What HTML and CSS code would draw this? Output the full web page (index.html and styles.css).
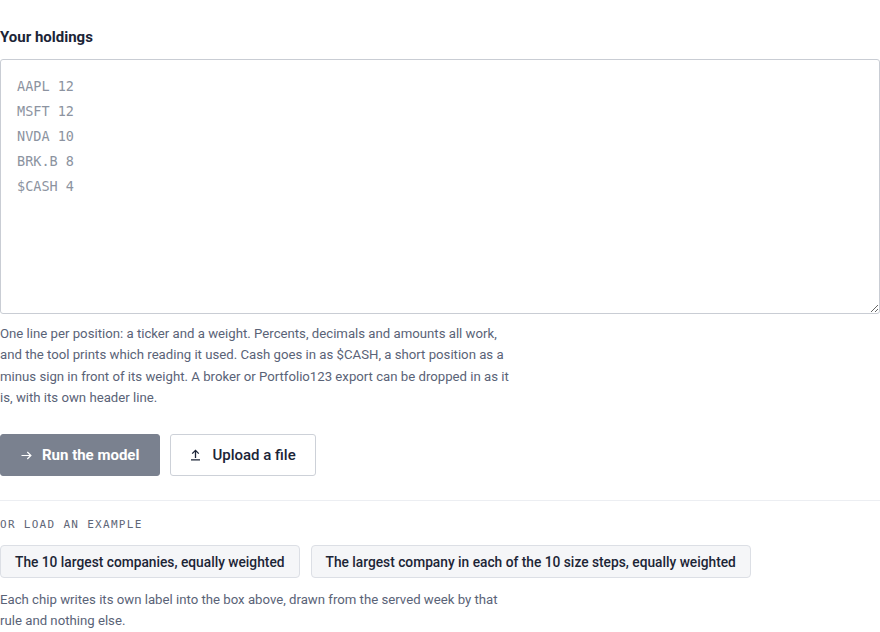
FILE: index.html
```html
<!DOCTYPE html>
<html lang="en">
<head>
<meta charset="utf-8">
<link rel="stylesheet" href="styles.css">
</head>
<body>
<main class="page">
  <label class="heading" for="holdings">Your holdings</label>
  <textarea id="holdings" class="holdings" placeholder="AAPL 12
MSFT 12
NVDA 10
BRK.B 8
$CASH 4"></textarea>
  <p class="help">One line per position: a ticker and a weight. Percents, decimals and amounts all work, and the tool prints which reading it used. Cash goes in as $CASH, a short position as a minus sign in front of its weight. A broker or Portfolio123 export can be dropped in as it is, with its own header line.</p>
  <div class="actions">
    <button class="btn btn-primary" type="button">
      <svg class="btn-svg" width="11" height="9" viewBox="0 0 11 9" aria-hidden="true"><path d="M0.5 4.5h9.5M6.3 1 9.9 4.5 6.3 8" fill="none" stroke="currentColor" stroke-width="1.2"/></svg>
      Run the model</button>
    <button class="btn btn-secondary" type="button">
      <svg class="btn-svg" width="11" height="12" viewBox="0 0 11 12" aria-hidden="true"><path d="M5.5 9V1.5M2.2 4.6 5.5 1.3l3.3 3.3M1 10.8h9" fill="none" stroke="currentColor" stroke-width="1.3"/></svg>
      Upload a file</button>
  </div>
  <hr class="divider">
  <div class="examples-label">OR LOAD AN EXAMPLE</div>
  <div class="chips">
    <button class="chip" type="button">The 10 largest companies, equally weighted</button>
    <button class="chip" type="button">The largest company in each of the 10 size steps, equally weighted</button>
  </div>
  <p class="help foot">Each chip writes its own label into the box above, drawn from the served week by that rule and nothing else.</p>
</main>
</body>
</html>
```
FILE: styles.css
```css
html, body {
  margin: 0;
  padding: 0;
  background: #ffffff;
}
body {
  font-family: Roboto, "Noto Sans", sans-serif;
  color: #1c2536;
}
.page {
  width: 880px;
  padding-top: 27px;
  display: flex;
  flex-direction: column;
  align-items: flex-start;
}
.heading {
  font-size: 15px;
  font-weight: 700;
  line-height: 20px;
  color: #1b2437;
  margin-bottom: 12px;
}
.holdings {
  box-sizing: border-box;
  width: 880px;
  height: 255px;
  margin: 0;
  padding: 14px 16px;
  border: 1px solid #c9cdd4;
  border-radius: 3px;
  font-family: "DejaVu Sans Mono", "Liberation Mono", monospace;
  font-size: 13.5px;
  line-height: 25px;
  color: #1c2536;
  resize: vertical;
  outline: none;
}
.holdings::placeholder {
  color: #8c93a0;
}
.help {
  margin: 9px 0 0;
  width: 514px;
  font-size: 13.2px;
  line-height: 21.3px;
  color: #5a6377;
}
.actions {
  display: flex;
  gap: 10px;
  margin-top: 26px;
}
.btn {
  height: 42px;
  box-sizing: border-box;
  border-radius: 3px;
  font-family: inherit;
  font-size: 15px;
  font-weight: 700;
  display: flex;
  align-items: center;
  cursor: pointer;
}
.btn-primary {
  background: #7a818f;
  color: #ffffff;
  border: 1px solid #7a818f;
  padding: 0 20px 0 20px;
  gap: 10px;
}
.btn-secondary {
  background: #ffffff;
  color: #1b2437;
  border: 1px solid #cdd1d8;
  padding: 0 19px 0 19px;
  gap: 11px;
  font-weight: 500;
}
.btn-svg {
  display: block;
}
.divider {
  align-self: stretch;
  border: 0;
  border-top: 1px solid #eceef2;
  margin: 24px 0 0;
}
.examples-label {
  margin-top: 16px;
  font-family: "DejaVu Sans Mono", "Liberation Mono", monospace;
  font-size: 11px;
  line-height: 16px;
  letter-spacing: 1.3px;
  color: #5f6778;
}
.chips {
  display: flex;
  gap: 11px;
  margin-top: 12px;
}
.chip {
  height: 33px;
  box-sizing: border-box;
  padding: 0 14px;
  background: #f5f6f8;
  border: 1px solid #dcdfe5;
  border-radius: 4px;
  font-family: inherit;
  font-size: 13.75px;
  font-weight: 500;
  color: #1c2536;
  cursor: pointer;
}
.foot {
  margin-top: 11px;
}
```
